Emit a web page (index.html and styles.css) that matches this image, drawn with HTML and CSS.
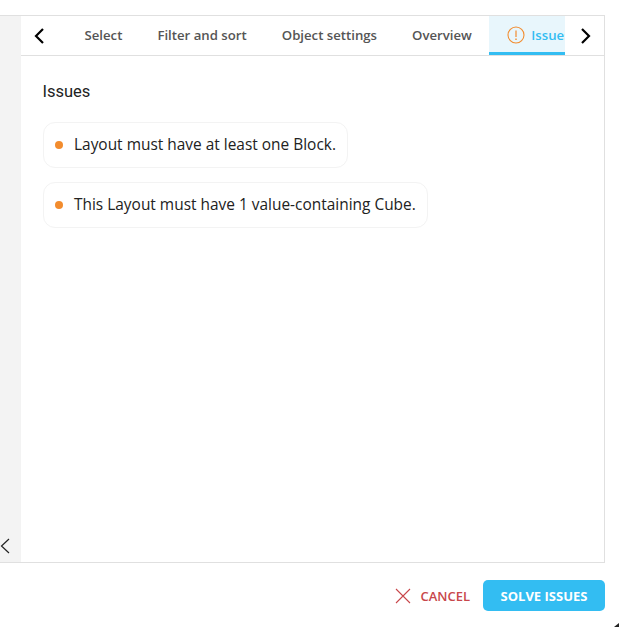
FILE: index.html
```html
<!DOCTYPE html>
<html lang="en">
<head>
    <meta charset="UTF-8">
    <title>Issues</title>
    <link rel="stylesheet" href="styles.css">
</head>
<body>
    <div class="panel">
        <div class="sidebar">
            <svg class="collapse" width="10" height="16" viewBox="0 0 10 16"><path d="M9 1 L1.5 8 L9 15" fill="none" stroke="#222" stroke-width="1.2"/></svg>
        </div>
        <div class="main">
            <div class="tabs">
                <button class="arrow arrow-left">
                    <svg width="12" height="18" viewBox="0 0 12 18"><path d="M10 2 L3 9 L10 16" fill="none" stroke="#000" stroke-width="2.2"/></svg>
                </button>
                <div class="tab-list">
                    <div class="tab">Select</div>
                    <div class="tab">Filter and sort</div>
                    <div class="tab">Object settings</div>
                    <div class="tab">Overview</div>
                    <div class="tab active">
                        <svg width="18" height="18" viewBox="0 0 18 18"><circle cx="9" cy="9" r="8" fill="none" stroke="#f28c2e" stroke-width="1.1"/><path d="M9 4.5 V11" stroke="#f28c2e" stroke-width="1.2" fill="none"/><path d="M9 12.5 V14" stroke="#f28c2e" stroke-width="1.4" fill="none"/></svg>
                        <span>Issues</span>
                    </div>
                </div>
                <button class="arrow arrow-right">
                    <svg width="12" height="18" viewBox="0 0 12 18"><path d="M2 2 L9 9 L2 16" fill="none" stroke="#000" stroke-width="2.2"/></svg>
                </button>
            </div>
            <div class="content">
                <h2 class="title">Issues</h2>
                <div class="issue"><span class="dot"></span><span class="issue-text">Layout must have at least one Block.</span></div>
                <div class="issue"><span class="dot"></span><span class="issue-text">This Layout must have 1 value-containing Cube.</span></div>
            </div>
        </div>
    </div>
    <div class="footer">
        <button class="cancel">
            <svg width="16" height="16" viewBox="0 0 16 16"><path d="M1 1 L15 15 M15 1 L1 15" stroke="#c8474b" stroke-width="1.1" fill="none"/></svg>
            CANCEL
        </button>
        <button class="solve">SOLVE ISSUES</button>
    </div>
    <div class="corner"></div>
</body>
</html>
```

FILE: styles.css
```css
html, body {
    margin: 0;
    height: 627px;
    overflow: hidden;
}
body {
    font-family: "Open Sans", sans-serif;
    background-color: white;
    padding-top: 15px;
    box-sizing: border-box;
    position: relative;
}
button {
    font-family: inherit;
    border: none;
    background: none;
    padding: 0;
    cursor: pointer;
}
.panel {
    display: flex;
    width: 605px;
    height: 548px;
    box-sizing: border-box;
    border-top: 1px solid #e0e0e0;
    border-bottom: 1px solid #e0e0e0;
    border-right: 1px solid #e0e0e0;
}
.sidebar {
    width: 21px;
    flex: none;
    background-color: #f3f3f3;
    display: flex;
    align-items: flex-end;
    padding-bottom: 8px;
    box-sizing: border-box;
}
.main {
    flex: 1;
    min-width: 0;
}
.tabs {
    display: flex;
    height: 40px;
    box-sizing: border-box;
    border-bottom: 1px solid #e0e0e0;
}
.arrow {
    flex: none;
    display: flex;
    align-items: center;
}
.arrow-left {
    width: 46px;
    padding-left: 12px;
    box-sizing: border-box;
}
.arrow-right {
    width: 39px;
    padding-left: 15px;
    box-sizing: border-box;
}
.tab-list {
    display: flex;
    flex: 1;
    min-width: 0;
    overflow: hidden;
}
.tab {
    flex: none;
    padding: 0 17.5px;
    line-height: 38px;
    font-size: 13.2px;
    font-weight: 600;
    color: #555;
    white-space: nowrap;
}
.tab.active {
    display: flex;
    align-items: center;
    gap: 6px;
    background-color: #e8f6fc;
    color: #33bdf2;
    height: 39px;
    box-sizing: border-box;
    padding-top: 2px;
    padding-left: 18px;
    border-bottom: 3px solid #33bdf2;
}
.content {
    padding: 25px 22px 25px 21.5px;
}
.title {
    margin: 0 0 19px;
    font-family: Roboto, sans-serif;
    font-size: 16.5px;
    font-weight: 400;
    line-height: 22px;
    color: #222;
}
.issue {
    display: flex;
    align-items: center;
    width: fit-content;
    height: 46px;
    box-sizing: border-box;
    margin-bottom: 14px;
    padding: 0 11px;
    border: 1px solid #f3f3f3;
    border-radius: 12px;
    font-size: 15.45px;
    color: #222;
}
.issue-text {
    margin-bottom: 2px;
}
.dot {
    width: 8px;
    height: 8px;
    border-radius: 50%;
    background-color: #f28c2e;
    margin-right: 11.5px;
}
.footer {
    display: flex;
    justify-content: flex-end;
    align-items: center;
    width: 605px;
    margin-top: 17px;
    gap: 13px;
}
.cancel {
    display: flex;
    align-items: center;
    gap: 9px;
    font-size: 13px;
    font-weight: 600;
    color: #c8474b;
}
.solve {
    width: 122px;
    height: 31px;
    border-radius: 5px;
    background-color: #33bdf2;
    color: white;
    font-size: 13px;
    font-weight: 700;
}
.corner {
    position: absolute;
    right: 0;
    bottom: 0;
    width: 0;
    height: 0;
    border-left: 5px solid transparent;
    border-bottom: 4px solid #222;
}
```
